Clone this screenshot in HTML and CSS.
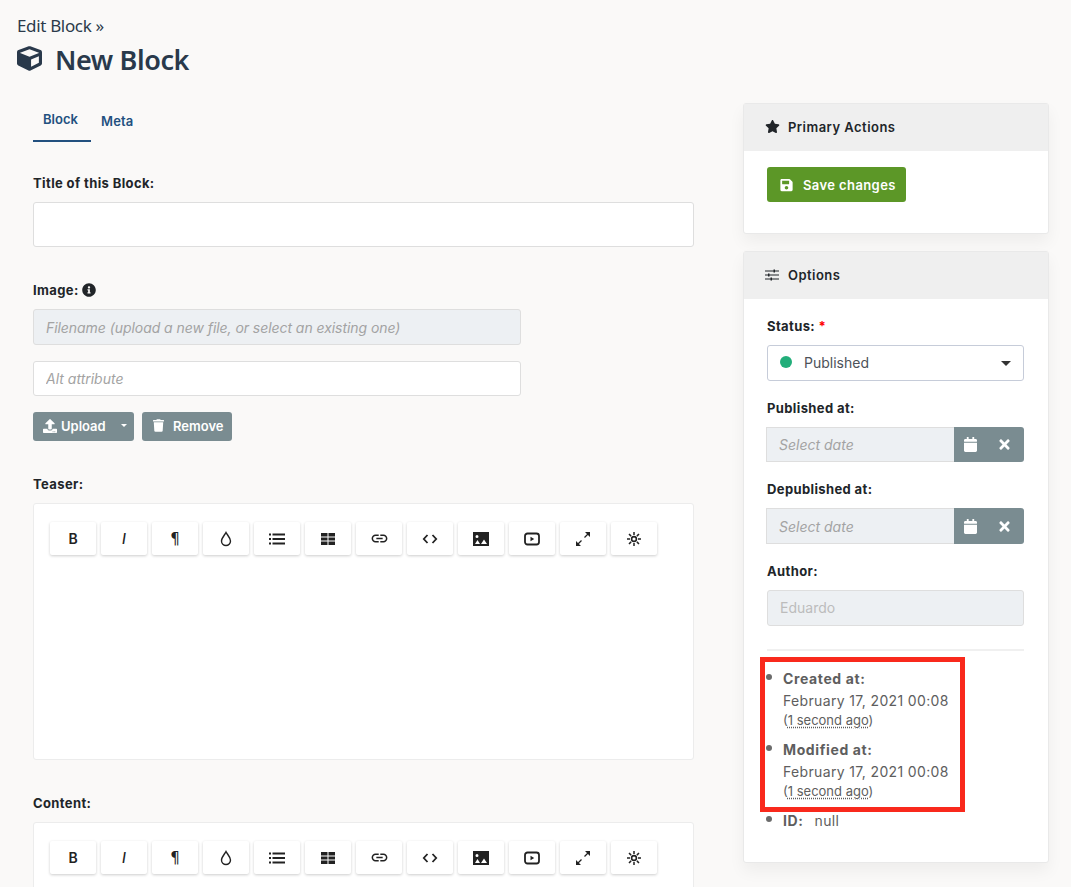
FILE: index.html
```html
<!DOCTYPE html>
<html lang="en">
<head>
<meta charset="utf-8">
<title>New Block</title>
<link rel="stylesheet" href="styles.css">
</head>
<body>
<svg class="defs" aria-hidden="true">
  <symbol id="i-drop" viewBox="0 0 16 16"><path d="M8 1.500C6.600 4.200 3.500 7.100 3.500 10a4.500 4.500 0 0 0 9 0C12.500 7.100 9.400 4.200 8 1.500z" fill="none" stroke="currentColor" stroke-width="1.400"/></symbol>
  <symbol id="i-list" viewBox="0 0 16 16"><path d="M0 2.500h2v2H0zM0 7h2v2H0zM0 11.500h2v2H0zM3.500 2.500H16v2H3.500zM3.500 7H16v2H3.500zM3.500 11.500H16v2H3.500z" fill="currentColor"/></symbol>
  <symbol id="i-table" viewBox="0 0 16 16"><path d="M1 2h6.500v3.500H1zM8.500 2H15v3.500H8.500zM1 6.500h6.500v3H1zM8.500 6.500H15v3H8.500zM1 10.500h6.500V14H1zM8.500 10.500H15V14H8.500z" fill="currentColor"/></symbol>
  <symbol id="i-link" viewBox="0 0 24 24"><path d="M3.900 12c0-1.710 1.390-3.100 3.100-3.100h4V7H7c-2.760 0-5 2.240-5 5s2.240 5 5 5h4v-1.900H7c-1.710 0-3.100-1.390-3.100-3.100zM8 13h8v-2H8v2zm9-6h-4v1.900h4c1.710 0 3.100 1.390 3.100 3.100s-1.390 3.100-3.100 3.100h-4V17h4c2.760 0 5-2.240 5-5s-2.240-5-5-5z" fill="currentColor"/></symbol>
  <symbol id="i-code" viewBox="0 0 16 16"><path d="M5.500 4 1.800 8l3.700 4M10.500 4l3.700 4-3.700 4" fill="none" stroke="currentColor" stroke-width="1.800"/></symbol>
  <symbol id="i-image" viewBox="0 0 16 14"><path fill-rule="evenodd" d="M0 0h16v14H0zM4 3a1.500 1.500 0 1 0 0 3 1.500 1.500 0 0 0 0-3zM2 12h5L4.500 8zM8 12h6l-3-4.500z" fill="currentColor"/></symbol>
  <symbol id="i-video" viewBox="0 0 16 14"><rect x="1" y="1.500" width="14" height="11" rx="2.500" fill="none" stroke="currentColor" stroke-width="1.800"/><path d="M6.500 4.800v4.400L10.200 7z" fill="currentColor"/></symbol>
  <symbol id="i-expand" viewBox="0 0 16 16"><path d="M9.500 6.500 14 2M2 14l4.500-4.500" stroke="currentColor" stroke-width="1.300" fill="none"/><path d="M10 1h5v5zM1 10v5h5z" fill="currentColor"/></symbol>
  <symbol id="i-sun" viewBox="0 0 16 16"><circle cx="8" cy="8" r="2.400" fill="none" stroke="currentColor" stroke-width="1.600"/><path d="M8 1v3M8 12v3M1 8h3M12 8h3M3 3l2.100 2.100M10.900 10.900 13 13M13 3l-2.100 2.100M5.100 10.900 3 13" stroke="currentColor" stroke-width="1.500"/></symbol>
  <symbol id="i-cal" viewBox="0 0 448 512"><path d="M12 192h424c6.600 0 12 5.400 12 12v260c0 26.500-21.500 48-48 48H48c-26.500 0-48-21.500-48-48V204c0-6.600 5.400-12 12-12zm436-44v-36c0-26.500-21.500-48-48-48h-48V12c0-6.600-5.400-12-12-12h-40c-6.600 0-12 5.400-12 12v52H160V12c0-6.600-5.400-12-12-12h-40c-6.600 0-12 5.400-12 12v52H48C21.500 64 0 85.500 0 112v36c0 6.600 5.400 12 12 12h424c6.600 0 12-5.400 12-12z" fill="currentColor"/></symbol>
  <symbol id="i-x" viewBox="0 0 352 512"><path d="M242.720 256l100.070-100.070c12.280-12.280 12.280-32.190 0-44.480l-22.240-22.240c-12.280-12.280-32.190-12.280-44.480 0L176 189.280 75.930 89.210c-12.280-12.280-32.190-12.280-44.480 0L9.210 111.450c-12.280 12.280-12.280 32.190 0 44.480L109.280 256 9.210 356.070c-12.280 12.280-12.280 32.190 0 44.480l22.240 22.240c12.280 12.280 32.200 12.280 44.480 0L176 322.720l100.070 100.070c12.280 12.280 32.200 12.280 44.480 0l22.240-22.240c12.280-12.280 12.280-32.190 0-44.480L242.720 256z" fill="currentColor"/></symbol>
</svg>

<div class="page">
  <header class="head">
    <div class="crumb">Edit Block »</div>
    <h1 class="title">
      <svg class="cube" viewBox="0 0 512 512"><path fill="currentColor" d="M239.100 6.300l-208 78c-18.700 7-31.100 25-31.100 45v225.100c0 18.200 10.300 34.800 26.500 42.900l208 104c13.500 6.800 29.400 6.800 42.900 0l208-104c16.300-8.100 26.500-24.800 26.500-42.900V129.300c0-20-12.400-37.900-31.100-44.900l-208-78C262 2.200 250 2.200 239.100 6.300zM256 68.400l192 72v1.100l-192 78-192-78v-1.100l192-72zm32 356V275.500l160-65v133.900l-160 80z"/></svg>
      New Block
    </h1>
  </header>

  <div class="columns">
    <main class="left">
      <nav class="tabs">
        <a class="tab active">Block</a>
        <a class="tab">Meta</a>
      </nav>

      <label class="label l-title">Title of this Block:</label>
      <input class="input i-title" type="text">

      <label class="label l-image">Image:
        <svg class="info" viewBox="0 0 512 512"><path fill="currentColor" d="M256 8C119 8 8 119.100 8 256c0 137 111 248 248 248s248-111 248-248C504 119.100 393 8 256 8zm0 110c23.200 0 42 18.800 42 42s-18.800 42-42 42-42-18.800-42-42 18.800-42 42-42zm56 254c0 6.600-5.400 12-12 12h-88c-6.600 0-12-5.400-12-12v-24c0-6.600 5.400-12 12-12h12v-64h-12c-6.600 0-12-5.400-12-12v-24c0-6.600 5.400-12 12-12h64c6.600 0 12 5.400 12 12v100h12c6.600 0 12 5.400 12 12v24z"/></svg>
      </label>
      <div class="image-fields">
        <input class="input filename" type="text" placeholder="Filename (upload a new file, or select an existing one)" disabled>
        <input class="input alt" type="text" placeholder="Alt attribute">
        <div class="img-btns">
          <button class="btn upload">
            <svg class="ic-upload" viewBox="0 0 512 512"><path fill="currentColor" d="M296 384h-80c-13.300 0-24-10.700-24-24V192h-87.700c-17.800 0-26.700-21.500-14.100-34.100L242.300 5.700c7.500-7.500 19.800-7.500 27.300 0l152.200 152.200c12.600 12.600 3.700 34.100-14.100 34.100H320v168c0 13.300-10.700 24-24 24zm216-8v112c0 13.300-10.700 24-24 24H24c-13.300 0-24-10.700-24-24V376c0-13.300 10.700-24 24-24h136v8c0 30.900 25.100 56 56 56h80c30.900 0 56-25.100 56-56v-8h136c13.300 0 24 10.700 24 24zm-124 88c0-11-9-20-20-20s-20 9-20 20 9 20 20 20 20-9 20-20zm64 0c0-11-9-20-20-20s-20 9-20 20 9 20 20 20 20-9 20-20z"/></svg>
            <span>Upload</span><i class="caret-sm"></i>
          </button>
          <button class="btn remove">
            <svg class="ic-trash" viewBox="0 0 448 512"><path fill="currentColor" d="M432 32H312l-9.400-18.700A24 24 0 0 0 281.100 0H166.800a23.720 23.720 0 0 0-21.400 13.300L136 32H16A16 16 0 0 0 0 48v32a16 16 0 0 0 16 16h416a16 16 0 0 0 16-16V48a16 16 0 0 0-16-16zM53.200 467a48 48 0 0 0 47.900 45h245.800a48 48 0 0 0 47.900-45L416 128H32z"/></svg>
            <span>Remove</span>
          </button>
        </div>
      </div>

      <label class="label l-teaser">Teaser:</label>
      <section class="editor teaser">
        <div class="toolbar">
          <button class="tool txt">B</button>
          <button class="tool txt it">I</button>
          <button class="tool txt pil">¶</button>
          <button class="tool"><svg class="t16"><use href="#i-drop"/></svg></button>
          <button class="tool"><svg class="t16"><use href="#i-list"/></svg></button>
          <button class="tool"><svg class="t16"><use href="#i-table"/></svg></button>
          <button class="tool"><svg class="t18"><use href="#i-link"/></svg></button>
          <button class="tool"><svg class="t16"><use href="#i-code"/></svg></button>
          <button class="tool"><svg class="t16"><use href="#i-image"/></svg></button>
          <button class="tool"><svg class="t16"><use href="#i-video"/></svg></button>
          <button class="tool"><svg class="t16"><use href="#i-expand"/></svg></button>
          <button class="tool"><svg class="t16"><use href="#i-sun"/></svg></button>
        </div>
      </section>

      <label class="label l-content">Content:</label>
      <section class="editor content">
        <div class="toolbar">
          <button class="tool txt">B</button>
          <button class="tool txt it">I</button>
          <button class="tool txt pil">¶</button>
          <button class="tool"><svg class="t16"><use href="#i-drop"/></svg></button>
          <button class="tool"><svg class="t16"><use href="#i-list"/></svg></button>
          <button class="tool"><svg class="t16"><use href="#i-table"/></svg></button>
          <button class="tool"><svg class="t18"><use href="#i-link"/></svg></button>
          <button class="tool"><svg class="t16"><use href="#i-code"/></svg></button>
          <button class="tool"><svg class="t16"><use href="#i-image"/></svg></button>
          <button class="tool"><svg class="t16"><use href="#i-video"/></svg></button>
          <button class="tool"><svg class="t16"><use href="#i-expand"/></svg></button>
          <button class="tool"><svg class="t16"><use href="#i-sun"/></svg></button>
        </div>
      </section>
    </main>

    <aside class="right">
      <section class="card actions">
        <h2 class="card-head">
          <svg class="ic-star" viewBox="0 0 576 512"><path fill="currentColor" d="M259.300 17.800L194 150.200 47.900 171.500c-26.200 3.800-36.700 36.100-17.700 54.600l105.700 103-25 145.500c-4.500 26.300 23.200 46 46.400 33.700L288 439.600l130.700 68.700c23.200 12.200 50.900-7.400 46.400-33.700l-25-145.500 105.700-103c19-18.500 8.500-50.800-17.700-54.600L382 150.200 316.700 17.800c-11.700-23.600-45.600-23.900-57.400 0z"/></svg>
          Primary Actions
        </h2>
        <div class="card-body">
          <button class="save">
            <svg class="ic-save" viewBox="0 0 448 512"><path fill="currentColor" d="M433.941 129.941l-83.882-83.882A48 48 0 0 0 316.118 32H48C21.490 32 0 53.490 0 80v352c0 26.510 21.490 48 48 48h352c26.510 0 48-21.490 48-48V163.882a48 48 0 0 0-14.059-33.941zM224 416c-35.346 0-64-28.654-64-64 0-35.346 28.654-64 64-64s64 28.654 64 64c0 35.346-28.654 64-64 64zm96-304.520V212c0 6.627-5.373 12-12 12H76c-6.627 0-12-5.373-12-12V108c0-6.627 5.373-12 12-12h228.520c3.183 0 6.235 1.264 8.485 3.515l3.480 3.480A11.996 11.996 0 0 1 320 111.480z"/></svg>
            Save changes
          </button>
        </div>
      </section>

      <section class="card options">
        <h2 class="card-head">
          <svg class="ic-sliders" viewBox="0 0 14 12"><path d="M0 2h14M0 6h14M0 10h14" stroke="currentColor" stroke-width="1.100"/><path d="M8.500 .5h1.500v3H8.500zM3 4.500h1.500v3H3zM5.500 8.500H7v3H5.500z" fill="currentColor"/></svg>
          Options
        </h2>
        <div class="opt-body">
          <label class="label l-status">Status: <span class="req">*</span></label>
          <div class="select"><i class="dot"></i><span>Published</span><i class="caret"></i></div>

          <label class="label l-pub">Published at:</label>
          <div class="date-group">
            <input class="date-input" type="text" placeholder="Select date" disabled>
            <div class="date-btns">
              <svg class="ic-cal"><use href="#i-cal"/></svg>
              <svg class="ic-x"><use href="#i-x"/></svg>
            </div>
          </div>

          <label class="label l-pub">Depublished at:</label>
          <div class="date-group tall">
            <input class="date-input" type="text" placeholder="Select date" disabled>
            <div class="date-btns">
              <svg class="ic-cal"><use href="#i-cal"/></svg>
              <svg class="ic-x"><use href="#i-x"/></svg>
            </div>
          </div>

          <label class="label l-pub">Author:</label>
          <input class="input author" type="text" value="Eduardo" disabled>

          <hr class="rule">

          <ul class="meta">
            <li><b>Created at:</b><br><span class="when">February 17, 2021 00:08</span><small>(<u>1 second ago</u>)</small></li>
            <li><b>Modified at:</b><br><span class="when">February 17, 2021 00:08</span><small>(<u>1 second ago</u>)</small></li>
            <li><b>ID:</b><span class="null">null</span></li>
          </ul>
        </div>
      </section>
    </aside>
  </div>
</div>
<div class="highlight"></div>
</body>
</html>
```
FILE: styles.css
```css
* { box-sizing: border-box; }
html, body { margin: 0; height: 887px; overflow: hidden; }
body { background: #faf9f8; font-family: Inter, "Liberation Sans", sans-serif; color: #212529; font-size: 14px; position: relative; }
.defs { position: absolute; width: 0; height: 0; }
button { font-family: inherit; border: 0; }

.head { padding: 15px 0 0 17px; height: 103px; font-family: "Noto Sans", sans-serif; color: #2b3a4a; }
.crumb { font-size: 17px; line-height: 22px; letter-spacing: -.34px; }
.title { margin: 2px 0 0; font-size: 27px; line-height: 42px; font-weight: 600; letter-spacing: -.4px; display: flex; align-items: center; color: #29394b; }
.cube { width: 25px; height: 25px; margin-right: 13px; position: relative; top: -2px; }

.columns { display: flex; align-items: flex-start; padding-left: 33px; }
.left { width: 661px; margin-right: 49px; margin-top: -2px; }
.right { width: 306px; }

.tabs { display: flex; height: 41px; }
.tab { font-size: 13px; font-weight: 600; color: #22507f; }
.tab.active { width: 58px; padding: 10px 0 0 10px; border-bottom: 2px solid #22507f; line-height: 16px; }
.tab:not(.active) { margin-left: 10px; padding-top: 12px; line-height: 16px; letter-spacing: .15px; }

.label { display: block; font-size: 13px; font-weight: 700; line-height: 16px; color: #212529; letter-spacing: .38px; }
.l-title { margin-top: 33px; }
.input { display: block; border: 1px solid #dedede; border-radius: 3px; background: #fff; font: italic 14px Inter, sans-serif; padding: 0 12px; width: 100%; outline: 0; }
.input::placeholder, .date-input::placeholder { color: #a3a3a3; opacity: 1; }
.i-title { margin-top: 11px; height: 45px; }
.l-image { margin-top: 35px; display: flex; align-items: center; gap: 4px; }
.info { width: 14px; height: 14px; position: relative; left: -1px; }
.image-fields { width: 488px; margin-top: 11px; }
.filename { height: 36px; background: #edf0f3; letter-spacing: -.06px; }
.alt { height: 35px; margin-top: 16px; }
.img-btns { display: flex; gap: 8px; margin-top: 16px; }
.btn { height: 29px; background: #7a8c91; color: #fff; border-radius: 3px; font-size: 13px; font-weight: 600; display: flex; align-items: center; padding: 0 0 2px; }
.upload { width: 101px; padding-left: 10px; }
.ic-upload { width: 14px; height: 14px; margin-right: 4px; }
.caret-sm { border: 3px solid transparent; border-top-color: #fff; border-bottom: 0; margin-left: 15px; }
.remove { width: 90px; padding-left: 11px; }
.ic-trash { width: 11px; height: 13px; margin-right: 9px; }

.l-teaser { margin-top: 35px; }
.editor { background: #fff; border: 1px solid #ececec; border-radius: 3px; margin-top: 11px; padding: 18px 16px 0; }
.teaser { height: 257px; }
.content { height: 120px; }
.l-content { margin-top: 35px; }
.toolbar { display: flex; gap: 5px; }
.tool { width: 46px; height: 33px; background: #fff; border-radius: 2px; box-shadow: 0 1px 3px rgba(0,0,0,.2); display: flex; align-items: center; justify-content: center; padding: 0; color: #222; }
.tool.txt { font: 600 14px Inter, sans-serif; }
.tool.it { font-style: italic; font-weight: 500; }
.tool.pil { font: 400 15px "DejaVu Sans", sans-serif; }
.t16 { width: 16px; height: 16px; }
.t18 { width: 19px; height: 19px; }

.card { width: 306px; background: #fff; border: 1px solid #e9e9e9; border-radius: 3px; box-shadow: 0 8px 16px rgba(0,0,0,.05); }
.actions { height: 131px; }
.options { height: 612px; margin-top: 17px; }
.card-head { margin: 0; height: 47px; background: #efefef; display: flex; align-items: center; padding: 0 0 2px 21px; font-size: 13px; font-weight: 600; color: #212529; letter-spacing: .47px; }
.ic-star { width: 15px; height: 13px; margin-right: 8px; }
.ic-sliders { width: 14px; height: 12px; margin-right: 9px; }
.card-body { padding: 16px 23px 0; }
.save { height: 35px; width: 139px; background: #5c9727; color: #fff; border-radius: 3px; font-size: 13px; font-weight: 600; letter-spacing: .4px; display: flex; align-items: center; padding: 0 0 0 13px; }
.ic-save { width: 13px; height: 14px; margin-right: 10px; }

.opt-body { padding: 0 24px 0 23px; }
.l-status { margin-top: 19px; }
.req { color: #f00; }
.select { margin-top: 11px; height: 36px; border: 1px solid #c6ccd9; border-radius: 3px; display: flex; align-items: center; padding: 0 12px 2px; color: #4d5259; }
.dot { width: 12px; height: 12px; border-radius: 50%; background: #22ae7a; margin-right: 12px; }
.caret { margin-left: auto; border: 5px solid transparent; border-top-color: #333; border-bottom: 0; position: relative; top: 1px; }
.l-pub { margin-top: 19px; }
.date-group { margin: 11px 0 0 -1px; height: 35px; display: flex; width: 258px; }
.date-group.tall { height: 36px; }
.date-input { width: 188px; height: 100%; background: #edf0f3; border: 1px solid #dedede; border-right: 0; padding: 0 12px; font: italic 14px Inter, sans-serif; outline: 0; }
.date-btns { width: 70px; background: #7a8c91; color: #fff; border-radius: 0 3px 3px 0; display: flex; align-items: center; padding-left: 10px; }
.ic-cal { width: 13px; height: 15px; }
.ic-x { width: 11px; height: 15px; margin-left: 22px; }
.author { margin-top: 11px; height: 36px; padding-bottom: 2px; background: #edf0f3; font-style: normal; color: #bcbcbc; -webkit-text-fill-color: #bcbcbc; }
.rule { border: 0; height: 2px; background: #f0f0f0; margin: 23px 0 0; }

.meta { list-style: none; margin: 17px 0 0; padding: 0 0 0 16px; color: #5e5e5e; font-size: 14px; line-height: 22px; letter-spacing: .35px; }
.meta li { position: relative; margin-bottom: 9px; }
.meta li::before { content: ""; position: absolute; left: -17px; top: 6px; width: 6px; height: 6px; border-radius: 50%; background: #6b6b6b; }
.meta li b { font-weight: 700; letter-spacing: .62px; }
.meta small { font-size: 13px; display: block; line-height: 16px; padding-bottom: 2px; letter-spacing: 0; }
.meta u { text-decoration: underline dotted; text-underline-offset: 2px; }
.null { margin-left: 11px; }

.highlight { position: absolute; left: 760px; top: 657px; width: 205px; height: 155px; border: 5px solid #f9291c; }
```
